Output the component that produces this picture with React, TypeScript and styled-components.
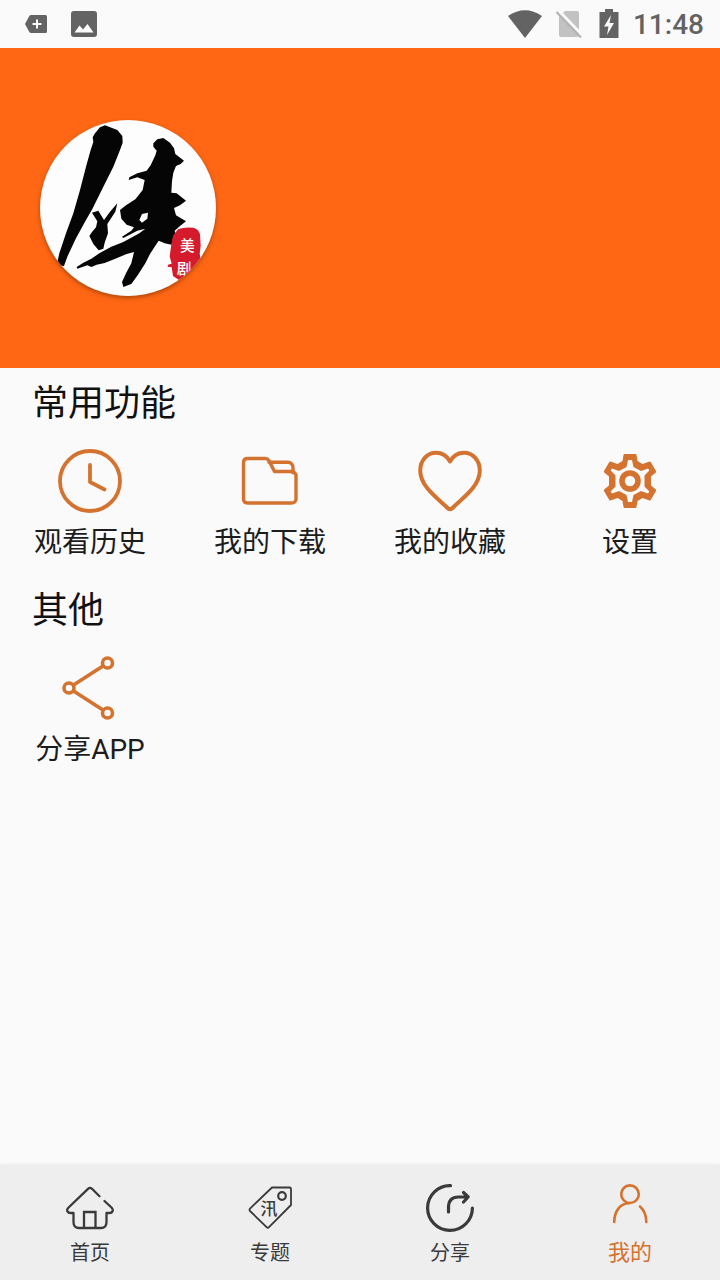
import React from "react";
import styled, { createGlobalStyle } from "styled-components";

const ACCENT = "#d4722f";
const INK = "#3a3a3a";
const STATUS = "#636363";

const GlobalStyle = createGlobalStyle`
  *, *::before, *::after { box-sizing: border-box; }
  body {
    margin: 0;
    background: #fafafa;
    color: #1c1c1c;
    font-family: Roboto, "Noto Sans CJK SC", sans-serif;
  }
  button, a { font: inherit; color: inherit; }
`;

const Page = styled.div`
  display: flex;
  flex-direction: column;
  min-height: 100vh;
`;

const StatusBar = styled.div`
  display: flex;
  align-items: center;
  justify-content: space-between;
  height: 48px;
  padding: 0 16px 0 24px;
  color: ${STATUS};
`;

const StatusGroup = styled.div<{ $gap: number }>`
  display: flex;
  align-items: center;
  gap: ${({ $gap }) => $gap}px;
`;

const Clock = styled.time`
  font-size: 28px;
  line-height: 32px;
  font-weight: 500;
  padding-top: 2px;
`;

const ProfileHeader = styled.header`
  padding: 72px 40px;
  background: #ff6714;
`;

const Avatar = styled.button`
  display: block;
  width: 176px;
  height: 176px;
  padding: 0;
  border: 0;
  border-radius: 50%;
  background: #fdfdfd;
  overflow: hidden;
  box-shadow: 0 2px 4px rgba(90, 40, 0, 0.5);
  cursor: pointer;
  svg { display: block; width: 100%; height: 100%; }
`;

const Main = styled.main`
  flex: 1;
`;

const Section = styled.section`
  padding: 10px 0 12px;
`;

const SectionTitle = styled.h2`
  margin: 0 0 19px;
  padding: 0 32px;
  font-size: 36px;
  line-height: 52px;
  font-weight: 400;
  color: #111;
`;

const Grid = styled.div`
  display: grid;
  grid-template-columns: repeat(4, 1fr);
`;

const Shortcut = styled.button`
  display: flex;
  flex-direction: column;
  align-items: center;
  gap: 10px;
  padding: 0;
  border: 0;
  background: none;
  font-size: 28px;
  line-height: 40px;
  cursor: pointer;
  svg { color: ${ACCENT}; }
`;

const TabBar = styled.nav`
  position: sticky;
  bottom: 0;
  display: grid;
  grid-template-columns: repeat(4, 1fr);
  background: #eee;
  box-shadow: 0 -1px 3px rgba(0, 0, 0, 0.06);
`;

const Tab = styled.a<{ $active?: boolean }>`
  display: flex;
  flex-direction: column;
  align-items: center;
  gap: 5px;
  padding: 19px 0 11px;
  font-size: ${({ $active }) => ($active ? 22 : 20)}px;
  line-height: 32px;
  text-decoration: none;
  && { color: ${({ $active }) => ($active ? ACCENT : INK)}; }
`;

type IconProps = { size: number; width?: number; children: React.ReactNode };

const Line = ({ size, width = 3, children }: IconProps) => (
  <svg
    width={size}
    height={size}
    viewBox={`0 0 ${size} ${size}`}
    fill="none"
    stroke="currentColor"
    strokeWidth={width}
    strokeLinecap="round"
    strokeLinejoin="round"
    aria-hidden="true"
  >
    {children}
  </svg>
);

const ClockIcon = () => (
  <Line size={64} width={3.8}>
    <circle cx="32" cy="32" r="30" />
    <path d="M32 16v17l14.500 7.500" />
  </Line>
);

const FolderIcon = () => (
  <Line size={64} width={3.4}>
    <path d="M9.500 9.500H27.500c1.500 0 2.500.7 3.300 2L36.500 22.500H53c3 0 5 1.800 5 4.500V50c0 2.500-2 4-4.500 4h-44C7 54 5.500 52.500 5.500 50V13.500c0-2.500 1.500-4 4-4z" />
    <path d="M31 13.300H50c3 0 5 2.500 5 5.500v5" />
  </Line>
);

const HeartIcon = () => (
  <Line size={64} width={4}>
    <path d="M32 12.500C29 7 23.500 3.800 18 3.800 9 3.800 2.200 11.500 2.200 21.500 2.200 37 18 48 29.800 59.200q2.200 2 4.400 0C46 48 61.800 37 61.800 21.500 61.800 11.500 55 3.800 46 3.800 40.500 3.800 35 7 32 12.500z" />
  </Line>
);

const GearIcon = () => (
  <Line size={64} width={5}>
    <path
      fill="currentColor"
      fillRule="evenodd"
      stroke="none"
      d="M26.500 5h11q.8 0 1 1L39.500 12 44.500 15 51.500 12.500q.8-.2 1.200.5L58 22q.4.800-.2 1.400L53 27.500V36.500L57.800 40.600q.6.600.2 1.400L52.700 51q-.4.700-1.200.5L44.500 49 39.500 52 38.500 58q-.2 1-1 1h-11q-.8 0-1-1L24.500 52 19.500 49 12.500 51.500q-.8.200-1.200-.5L6 42q-.4-.8.200-1.400L11 36.500V27.500L6.200 23.400Q5.600 22.800 6 22L11.300 13q.4-.7 1.200-.5L19.500 15 24.500 12 25.500 6q.2-1 1-1zM30 11 28.500 18 21 22 14 19.500 12.700 21.500 17.500 26.500V37.500L12.700 42.500 14 44.500 21 42 28.500 46 30 53H34L35.500 46 43 42 50 44.500 51.300 42.500 46.500 37.500V26.500L51.300 21.500 50 19.500 43 22 35.500 18 34 11z"
    />
    <circle cx="32" cy="32" r="8" strokeWidth="5.600" />
  </Line>
);

const BranchIcon = () => (
  <Line size={64} width={3.6}>
    <circle cx="11" cy="32" r="5" />
    <circle cx="49.500" cy="7" r="5" />
    <circle cx="49.500" cy="57" r="5" />
    <path d="M15.500 29 45 10M15.500 35 45 54" />
  </Line>
);

const HomeIcon = () => (
  <Line size={48} width={2.300}>
    <path d="M33.500 12.200 26 4.800q-2-1.800-4 0L2.600 23.500c-3 3-.8 5.500 2 5.500H7.500V38c0 4 2 6 5.500 6h22c3.500 0 5.500-2 5.500-6V29H43.500c3 0 4.500-3 2-5.500L38.500 17" />
    <path strokeLinecap="butt" strokeLinejoin="miter" d="M18 44V28H29.500V44" />
  </Line>
);

const TagIcon = () => (
  <Line size={48} width={1.800}>
    <path d="M26 3.500H43.500q1.500 0 1.500 1.500V21L23 43.200q-1.200 1.200-2.400 0L4 27q-1-1.200 0-2.400z" />
    <circle cx="36" cy="12" r="3.800" strokeWidth="2.200" />
    <text
      x="23"
      y="31"
      textAnchor="middle"
      fontFamily='"Noto Sans CJK SC", sans-serif'
      fontSize="17"
      fontWeight="500"
      fill="currentColor"
      stroke="none"
    >
      汛
    </text>
  </Line>
);

const ForwardIcon = () => (
  <Line size={48} width={3.200}>
    <path d="M24.500 1.600A22.400 22.400 0 1 0 46.400 24" />
    <path d="M22.500 28V23.500C22.500 16.500 26 13 32.500 13H42M37.500 8.500 42.200 13 37.500 18" />
  </Line>
);

const UserIcon = () => (
  <Line size={48} width={2.600}>
    <circle cx="24" cy="10.200" r="8.800" />
    <path d="M8.200 38C8.500 27 14 19.500 23 19.300M34 22.500C38 26 40.200 31 40.300 38" />
  </Line>
);

const AvatarLogo = () => (
  <svg viewBox="30 30 528 528" role="img" aria-label="侠美剧">
    <path
      fill="#050505"
      d="M210 52 225 46 262 60 277 78 278 98 270 120 250 170 220 230 187 297 165 335 138 385 112 440 102 468 80 466 88 430 108 370 130 310 150 240 168 170 182 120 190 96 188 82 195 70z"
    />
    <path
      fill="#050505"
      d="M186 308 205 302 222 330 240 305 262 280 256 305 232 342 234 370 224 398 220 416 206 421 190 402 178 378 186 366 198 352 202 334z"
    />
    <path
      fill="#050505"
      fillRule="evenodd"
      d="M370 100 382 88 400 84 420 98 432 115 436 132 462 152 452 162 438 168 430 188 426 214 424 248 440 250 468 272 450 286 432 294 438 316 468 334 450 348 434 362 440 384 424 404 404 400 386 392 374 410 360 432 346 460 324 494 304 522 280 531 276 516 288 490 304 460 312 426 290 432 256 446 224 459 200 464 184 471 172 466 142 476 140 471 160 458 184 446 208 430 244 410 280 396 328 370 346 356 322 362 280 384 276 380 304 362 312 352 290 344 274 326 270 300 288 286 316 268 338 240 344 210 322 202 296 210 298 202 322 190 350 182 362 166 376 136 380 122 370 110zM354 308 336 312 328 330 336 338 352 326z"
    />
    <path
      fill="#d51b2b"
      d="M444 358q18-8 46-5 16 4 20 20l2 34-3 24 4 24-16 22-34 24-16 9-18-12-4-26-12-2 1-6 11-3-6-22 5-36 5-26z"
    />
    <g
      fill="#fff"
      fontFamily='"Noto Sans CJK SC", sans-serif'
      fontWeight="500"
      fontSize="44"
      textAnchor="middle"
    >
      <text x="472" y="424">
        美
      </text>
      <text x="462" y="492">
        剧
      </text>
    </g>
  </svg>
);

const TagPlusGlyph = () => (
  <svg width="24" height="24" viewBox="0 0 24 24" aria-hidden="true">
    <path
      fill="currentColor"
      fillRule="evenodd"
      d="M7 3H21.500Q23 3 23 4.500V19.500Q23 21 21.500 21H7Q6 21 5.300 20L1 12 5.300 4Q6 3 7 3zM12 7.500V11H8.500V13H12V16.500H14V13H17.500V11H14V7.500z"
    />
  </svg>
);

const PictureGlyph = () => (
  <svg width="26" height="26" viewBox="0 0 26 26" aria-hidden="true">
    <rect width="26" height="26" rx="3" fill="currentColor" />
    <path fill="#fff" d="M3.500 21.500 8.500 14.500 12 18.500 16.500 13 22.500 21.500z" />
  </svg>
);

const WifiGlyph = () => (
  <svg width="36" height="30" viewBox="0 0 36 30" aria-hidden="true">
    <path fill="currentColor" d="M1 7Q18-4.500 35 7L18 29z" />
  </svg>
);

const NoSimGlyph = () => (
  <svg width="28" height="30" viewBox="0 0 28 30" aria-hidden="true">
    <path fill="#c2c2c2" d="M10 2H22Q24 2 24 4V26Q24 28 22 28H6Q4 28 4 26V8z" />
    <path stroke="#fafafa" strokeWidth="3" d="M3.500 1.500 28 27" />
    <path stroke="#b4b4b4" strokeWidth="2.200" d="M1.500 3 26 28.500" />
  </svg>
);

const BatteryGlyph = () => (
  <svg width="20" height="30" viewBox="0 0 20 30" aria-hidden="true">
    <path fill="currentColor" d="M6 0H14V3H19.500V29H.5V3H6z" />
    <path fill="#fafafa" d="M12 6 5 17.500H9.500L8 26 15 14H10.500z" />
  </svg>
);

const shortcuts = [
  { label: "观看历史", icon: <ClockIcon /> },
  { label: "我的下载", icon: <FolderIcon /> },
  { label: "我的收藏", icon: <HeartIcon /> },
  { label: "设置", icon: <GearIcon /> },
];

const tabs = [
  { label: "首页", href: "#home", icon: <HomeIcon /> },
  { label: "专题", href: "#topics", icon: <TagIcon /> },
  { label: "分享", href: "#share", icon: <ForwardIcon /> },
  { label: "我的", href: "#me", icon: <UserIcon />, active: true },
];

export default function App() {
  return (
    <Page>
      <GlobalStyle />
      <StatusBar>
        <StatusGroup $gap={23}>
          <TagPlusGlyph />
          <PictureGlyph />
        </StatusGroup>
        <StatusGroup $gap={14}>
          <StatusGroup $gap={12}>
            <WifiGlyph />
            <StatusGroup $gap={16}>
              <NoSimGlyph />
              <BatteryGlyph />
            </StatusGroup>
          </StatusGroup>
          <Clock>11:48</Clock>
        </StatusGroup>
      </StatusBar>
      <ProfileHeader>
        <Avatar type="button">
          <AvatarLogo />
        </Avatar>
      </ProfileHeader>
      <Main>
        <Section>
          <SectionTitle>常用功能</SectionTitle>
          <Grid>
            {shortcuts.map(({ label, icon }) => (
              <Shortcut key={label} type="button">
                {icon}
                {label}
              </Shortcut>
            ))}
          </Grid>
        </Section>
        <Section>
          <SectionTitle>其他</SectionTitle>
          <Grid>
            <Shortcut type="button">
              <BranchIcon />
              分享APP
            </Shortcut>
          </Grid>
        </Section>
      </Main>
      <TabBar>
        {tabs.map(({ label, href, icon, active }) => (
          <Tab key={label} href={href} $active={active} aria-current={active ? "page" : undefined}>
            {icon}
            {label}
          </Tab>
        ))}
      </TabBar>
    </Page>
  );
}
